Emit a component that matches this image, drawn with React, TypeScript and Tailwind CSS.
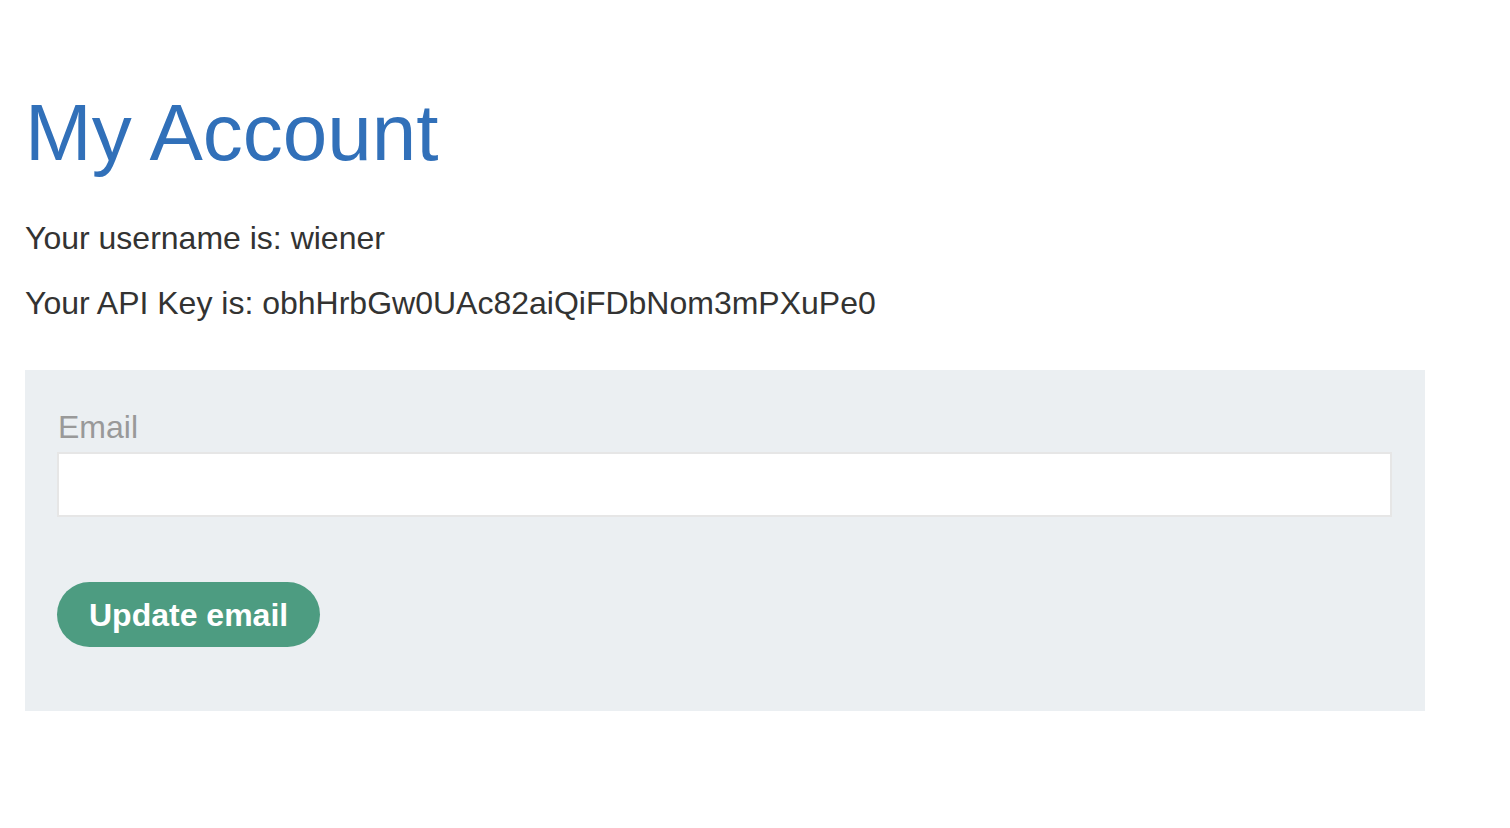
export default function App() {
  return (
    <div className="min-h-screen bg-white pl-[25px] pr-[85px] pt-[93px] font-['Liberation_Sans',Arial,sans-serif] text-[#333332]">
      <h1 className="text-[80px] leading-none font-normal text-[#3170b9]">My Account</h1>
      <p className="mt-[43px] text-[32px] leading-[1.4]">Your username is: wiener</p>
      <p className="mt-[20px] text-[32px] leading-[1.4]">Your API Key is: obhHrbGw0UAc82aiQiFDbNom3mPXuPe0</p>
      <form
        className="mt-[44px] bg-[#ebeff2] pl-[32px] pr-[33px] pt-[35px] pb-[64px]"
        onSubmit={(e) => e.preventDefault()}
      >
        <label className="block pl-px text-[32px] leading-[1.4] text-[#999999]">Email</label>
        <input
          type="email"
          name="email"
          className="mt-[3px] block h-[65px] w-full border-2 border-[#e6e6e6] bg-white px-3 text-[32px] outline-none"
        />
        <button
          type="submit"
          className="mt-[65px] h-[65px] rounded-full bg-[#4d9c81] px-[32px] text-[32px] font-bold text-white"
        >
          Update email
        </button>
      </form>
    </div>
  );
}
